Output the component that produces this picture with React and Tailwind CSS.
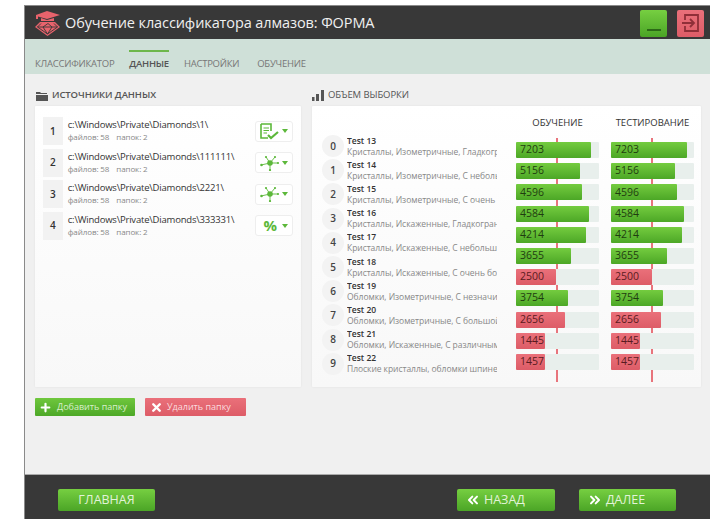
import React from "react";
import { Plus, X, ChevronsLeft, ChevronsRight, ChevronDown } from "lucide-react";

const FONT = "font-['Open_Sans','Noto_Sans',sans-serif]";

const folders = [
  { id: 1, path: "c:\\Windows\\Private\\Diamonds\\1\\", icon: "doc" },
  { id: 2, path: "c:\\Windows\\Private\\Diamonds\\111111\\", icon: "net" },
  { id: 3, path: "c:\\Windows\\Private\\Diamonds\\2221\\", icon: "net" },
  { id: 4, path: "c:\\Windows\\Private\\Diamonds\\333331\\", icon: "pct" },
];

const samples = [
  { name: "Test 13", desc: "Кристаллы, Изометричные, Гладкогранные" },
  { name: "Test 14", desc: "Кристаллы, Изометричные, С небольшими" },
  { name: "Test 15", desc: "Кристаллы, Изометричные, С очень большими" },
  { name: "Test 16", desc: "Кристаллы, Искаженные, Гладкогранные" },
  { name: "Test 17", desc: "Кристаллы, Искаженные, С небольшой" },
  { name: "Test 18", desc: "Кристаллы, Искаженные, С очень большими" },
  { name: "Test 19", desc: "Обломки, Изометричные, С незначительными" },
  { name: "Test 20", desc: "Обломки, Изометричные, С большой и" },
  { name: "Test 21", desc: "Обломки, Искаженные, С различным характером" },
  { name: "Test 22", desc: "Плоские кристаллы, обломки шпинелевых" },
];

// value, bar width in px
const bars = [
  [7203, 75, 76],
  [5156, 64, 64],
  [4596, 66, 66],
  [4584, 73, 73],
  [4214, 70, 71],
  [3655, 55, 56],
  [2500, 40, 41],
  [3754, 52, 52],
  [2656, 49, 50],
  [1445, 29, 29],
  [1457, 29, 29],
];

const Logo = () => (
  <svg width="28" height="26" viewBox="0 0 28 26" className="shrink-0">
    <path d="M13 1 L26 5 L13 9 L4 6.5 L4 9 L2 9 L2 5 Z" fill="#e8636c" />
    <path d="M7 8 L13 10 L20 8 L20 11 L7 11 Z" fill="#e8636c" />
    <path
      d="M6 12 H21 L26 17 L13.5 26 L1 17 Z"
      fill="#e8636c"
    />
    <path
      d="M7 13.5 L3.5 17 H23.5 M20 13.5 L23.5 17 L13.5 24 L3.5 17 M9 17 L13.5 24 L18 17 L14 13.5 L9 17"
      fill="none"
      stroke="#383838"
      strokeWidth="0.9"
    />
  </svg>
);

const ExitIcon = () => (
  <svg width="20" height="20" viewBox="0 0 20 20" fill="none" stroke="#8f2f38" strokeWidth="1.8">
    <path d="M4 7 V2 H17 V18 H4 V13" />
    <path d="M1 10 H12 M9 6 L13 10 L9 14" />
  </svg>
);

const FolderIcon = () => (
  <svg width="12" height="10" viewBox="0 0 12 10">
    <path d="M0 1 H4 L5 2 H11 V3 H0 Z M0 4 H12 V10 H0 Z" fill="#555555" />
  </svg>
);

const BarsIcon = () => (
  <svg width="12" height="11" viewBox="0 0 12 11" fill="#555555">
    <rect x="0" y="7" width="2.5" height="4" />
    <rect x="4" y="4" width="3" height="7" />
    <rect x="9" y="0" width="3" height="11" />
  </svg>
);

const DocIcon = () => (
  <svg width="20" height="17" viewBox="0 0 20 17" fill="none">
    <path d="M1 1 H11 V8 M1 1 V15 H8" stroke="#5cb83a" strokeWidth="1.6" />
    <path d="M3.5 5 H9 M3.5 7.5 H9 M3.5 10 H7" stroke="#5cb83a" strokeWidth="1.2" />
    <path d="M8 12 L11 15 L18 9" stroke="#5cb83a" strokeWidth="2.2" />
  </svg>
);

const NetIcon = () => (
  <svg width="20" height="16" viewBox="0 0 20 16" fill="#5cb83a" stroke="#5cb83a">
    <path d="M10 8 L6 2 M10 8 L15 2 M10 8 L18 8 M10 8 L10 15 M10 8 L1 10" strokeWidth="0.9" />
    <circle cx="10" cy="8" r="2.8" stroke="none" />
    <circle cx="6" cy="2" r="1.1" stroke="none" />
    <circle cx="15" cy="2" r="1.1" stroke="none" />
    <circle cx="18" cy="8" r="1.1" stroke="none" />
    <circle cx="10" cy="15" r="1.1" stroke="none" />
    <circle cx="1.5" cy="10" r="1.3" stroke="none" />
  </svg>
);

const SourceRow = ({ item }) => (
  <div className="flex h-[28px] items-center">
    <div className="flex h-full w-[20px] items-center justify-center bg-[#f2f2f2] text-[10px] font-semibold text-[#333]">
      {item.id}
    </div>
    <div className="ml-[5px] w-[190px] pb-[1px]">
      <div className="text-[9.5px] leading-[12px] tracking-[-0.2px] text-[#333]">{item.path}</div>
      <div className="flex gap-[7px] text-[8px] leading-[11px] tracking-[-0.1px] text-[#888]">
        <span>файлов: 58</span>
        <span>папок: 2</span>
      </div>
    </div>
    <button className="flex h-[21px] w-[38px] items-center justify-center gap-[2px] rounded-[3px] border border-[#eeeeee] bg-white">
      {item.icon === "doc" && <DocIcon />}
      {item.icon === "net" && <NetIcon />}
      {item.icon === "pct" && (
        <span className="w-[20px] text-center text-[15px] leading-none font-bold text-[#5cb83a]">%</span>
      )}
      <span className="h-0 w-0 border-x-[3.5px] border-t-[4px] border-x-transparent border-t-[#5cb83a]" />
    </button>
  </div>
);

const SampleRow = ({ index, sample }) => (
  <div className="flex h-[24.2px] items-center">
    <div className="flex h-[22px] w-[22px] shrink-0 items-center justify-center rounded-full bg-[#f3f3f3] text-[10px] font-semibold text-[#444]">
      {index}
    </div>
    <div className="ml-[3px] w-[150px] overflow-hidden whitespace-nowrap">
      <div className="text-[8.5px] leading-[11px] font-semibold text-[#333]">{sample.name}</div>
      <div className="text-[8.5px] leading-[12px] tracking-[-0.05px] text-[#888]">{sample.desc}</div>
    </div>
  </div>
);

const BarColumn = ({ title, valueIndex }) => (
  <div className="w-[83px]">
    <div className="mb-[9px] text-center text-[9.5px] leading-[13px] whitespace-nowrap text-[#333]">{title}</div>
    <div className="relative flex flex-col gap-[5.2px] py-[4px]">
      <div className="absolute top-0 bottom-[-8px] left-[40px] w-[1.5px] bg-[#e8747c]" />
      {bars.slice(0, 11).map((bar, i) => {
        const low = bar[0] < 3000;
        return (
          <div key={i} className="relative h-[16px] rounded-[1px] bg-[#e8efec]">
            <div
              className={`absolute inset-y-0 left-0 flex items-center rounded-[1px] pl-[4px] text-[10.5px] ${
                low
                  ? "bg-gradient-to-b from-[#ea707a] to-[#dd5c67] text-[#5a1b20]"
                  : "bg-gradient-to-b from-[#74cc3f] to-[#4ca726] text-[#1f3d10]"
              }`}
              style={{ width: bar[valueIndex] }}
            >
              {bar[0]}
            </div>
          </div>
        );
      })}
    </div>
  </div>
);

const GreenButton = ({ children, className }) => (
  <button
    className={`flex h-[22px] w-[97px] items-center rounded-[2px] bg-gradient-to-b from-[#76cf41] to-[#4ba526] text-[12.5px] text-[#e2f3d8] ${className}`}
  >
    {children}
  </button>
);

export default function App() {
  return (
    <div className={`h-[519px] w-[710px] overflow-hidden bg-white pt-[5px] pl-[24px] ${FONT}`}>
      <div className="flex h-[514px] flex-col border-t border-l border-[#8a8a8a] bg-[#f0f0f0]">
        {/* title bar */}
        <header className="flex h-[33px] shrink-0 items-center bg-[#383838] pl-[9px]">
          <Logo />
          <h1 className="ml-[3px] text-[14.5px] tracking-[-0.1px] text-[#f0f0f0]">
            Обучение классификатора алмазов: ФОРМА
          </h1>
          <div className="mt-[1px] ml-auto flex gap-[10px] pr-[6px]">
            <button className="flex h-[27px] w-[27px] items-end justify-center rounded-[2px] bg-gradient-to-b from-[#76cf41] to-[#4ba526] pb-[6px]">
              <span className="h-[2px] w-[14px] bg-[#2c6a17]" />
            </button>
            <button className="flex h-[27px] w-[27px] items-center justify-center rounded-[2px] bg-gradient-to-b from-[#ea707a] to-[#dd5c67]">
              <ExitIcon />
            </button>
          </div>
        </header>

        {/* tabs */}
        <nav className="flex h-[35px] shrink-0 items-end gap-[15px] bg-[#cfe0d8] pl-[10px] text-[9.5px] leading-[13px] tracking-[-0.25px] text-[#777]">
          <span className="pb-[4px]">КЛАССИФИКАТОР</span>
          <span className="flex flex-col pb-[4px] font-semibold text-[#555]">
            <span className="mb-[5px] h-[2px] bg-[#6db74b]" />
            ДАННЫЕ
          </span>
          <span className="pb-[4px]">НАСТРОЙКИ</span>
          <span className="ml-[3px] pb-[4px]">ОБУЧЕНИЕ</span>
        </nav>

        {/* sections */}
        <main className="grid flex-1 grid-cols-[266px_389px] gap-x-[11px] pt-[11px] pl-[10px]">
          <section>
            <h2 className="flex h-[21px] items-center gap-[4px] pl-[1px] text-[9.5px] font-semibold tracking-[-0.1px] text-[#555]">
              <FolderIcon />
              ИСТОЧНИКИ ДАННЫХ
            </h2>
            <div className="mt-[0px] h-[281px] rounded-[1px] bg-gradient-to-b from-white to-[#f8f8f8] px-[8px] pt-[11px] shadow-[0_0_2px_rgba(0,0,0,0.08)]">
              <div className="flex flex-col gap-[3.5px]">
                {folders.map((item) => (
                  <SourceRow key={item.id} item={item} />
                ))}
              </div>
            </div>
            <div className="mt-[11px] flex gap-[10px]">
              <button className="flex h-[18px] w-[100px] items-center gap-[5px] rounded-[1px] bg-gradient-to-b from-[#6fc73d] to-[#4da827] pl-[4px] text-[9px] text-[#d9efcc]">
                <Plus size={13} strokeWidth={4} color="#ffffff" />
                Добавить папку
              </button>
              <button className="flex h-[18px] w-[101px] items-center gap-[4px] rounded-[1px] bg-gradient-to-b from-[#ea707a] to-[#dd5c67] pl-[5px] text-[9px] text-[#fbdcdf]">
                <X size={13} strokeWidth={4.5} color="#ffffff" />
                Удалить папку
              </button>
            </div>
          </section>

          <section>
            <h2 className="flex h-[21px] items-center gap-[4px] text-[9.5px] tracking-[-0.1px] text-[#555]">
              <BarsIcon />
              ОБЪЕМ ВЫБОРКИ
            </h2>
            <div className="flex h-[281px] rounded-[1px] bg-gradient-to-b from-white to-[#f8f8f8] pt-[10px] pl-[10px] shadow-[0_0_2px_rgba(0,0,0,0.08)]">
              <div className="w-[194px] pt-[18px]">
                {samples.map((sample, i) => (
                  <SampleRow key={sample.name} index={i === 0 ? "0" : i} sample={sample} />
                ))}
              </div>
              <div className="flex gap-[12px]">
                <BarColumn title="ОБУЧЕНИЕ" valueIndex={1} />
                <BarColumn title="ТЕСТИРОВАНИЕ" valueIndex={2} />
              </div>
            </div>
          </section>
        </main>

        {/* bottom bar */}
        <footer className="flex h-[45px] shrink-0 items-start border-t border-[#aaaaaa] bg-[#383838] pt-[14px] pl-[33px]">
          <GreenButton className="justify-center">ГЛАВНАЯ</GreenButton>
          <GreenButton className="ml-[302px] w-[98px] pl-[8px]">
            <ChevronsLeft size={16} strokeWidth={3} color="#ffffff" />
            <span className="ml-[3px]">НАЗАД</span>
          </GreenButton>
          <GreenButton className="ml-[24px] pl-[8px]">
            <ChevronsRight size={16} strokeWidth={3} color="#ffffff" />
            <span className="ml-[3px]">ДАЛЕЕ</span>
          </GreenButton>
        </footer>
      </div>
    </div>
  );
}
